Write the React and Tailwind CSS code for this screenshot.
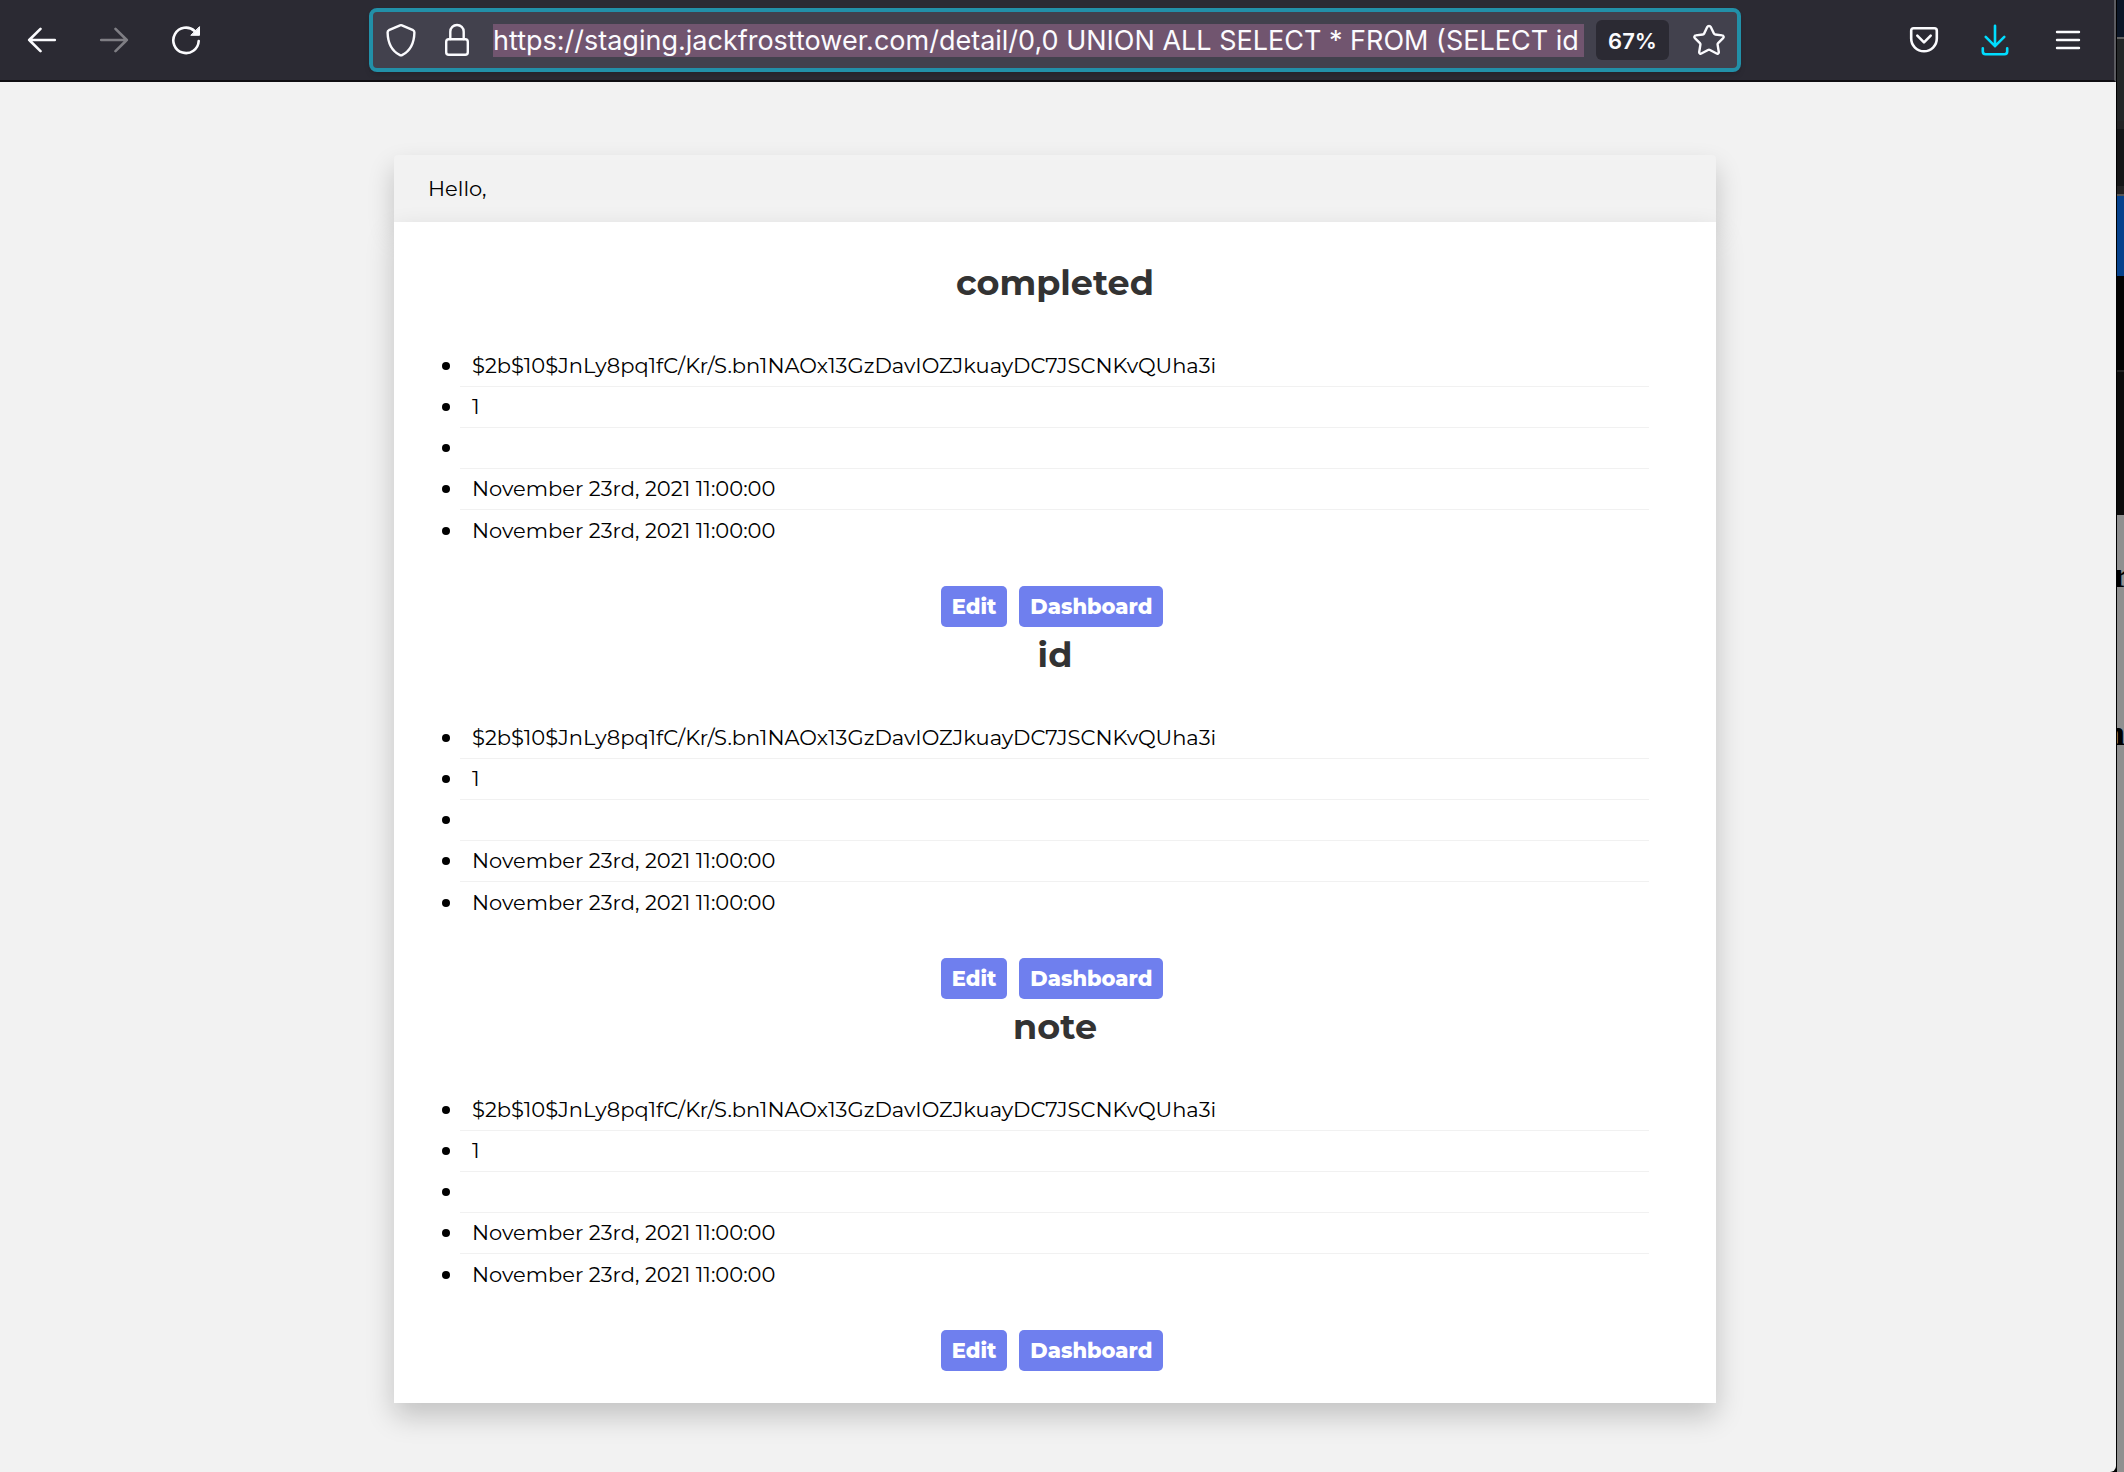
const URL_TEXT =
  "https://staging.jackfrosttower.com/detail/0,0 UNION ALL SELECT * FROM (SELECT id";

const rows = [
  "$2b$10$JnLy8pq1fC/Kr/S.bn1NAOx13GzDavIOZJkuayDC7JSCNKvQUha3i",
  "1",
  "",
  "November 23rd, 2021 11:00:00",
  "November 23rd, 2021 11:00:00",
];

const records = ["completed", "id", "note"];

const line = {
  fill: "none",
  stroke: "currentColor",
  strokeLinecap: "round",
  strokeLinejoin: "round",
};

function BackIcon() {
  return (
    <svg width="30" height="26" viewBox="0 0 30 26" strokeWidth="2.6" {...line}>
      <path d="M13.5 1.8 2.2 13l11.3 11.2M2.2 13h25.6" />
    </svg>
  );
}

function ForwardIcon() {
  return (
    <svg width="30" height="26" viewBox="0 0 30 26" strokeWidth="2.6" {...line}>
      <path d="M16.5 1.8 27.8 13 16.5 24.2M27.8 13H2.2" />
    </svg>
  );
}

function ReloadIcon() {
  return (
    <svg width="30" height="30" viewBox="0 0 30 30" strokeWidth="2.6" {...line}>
      <path d="M27.7 16A12.7 12.7 0 1 1 23.6 6" />
      <path d="M28.5 2v8.3H20.2z" fill="currentColor" strokeWidth="1" />
    </svg>
  );
}

function ShieldIcon() {
  return (
    <svg width="30" height="34" viewBox="0 0 30 34" strokeWidth="2.4" {...line}>
      <path d="M14.1 2.3q.9-.4 1.8 0l11.2 4.900q1.300.7 1.300 2.200C28.200 19 25 27.500 16 32.100q-1 .5-2 0C5 27.500 1.800 19 1.600 9.400q0-1.500 1.300-2.200z" />
    </svg>
  );
}

function LockIcon() {
  return (
    <svg width="24" height="34" viewBox="0 0 24 34" strokeWidth="2.4" {...line}>
      <rect x="1.2" y="16.2" width="21.6" height="15.6" rx="2.6" />
      <path d="M5.3 16V8.700a6.700 6.700 0 0 1 13.400 0V16" />
    </svg>
  );
}

function StarIcon() {
  return (
    <svg width="32" height="32" viewBox="0 0 32 32" strokeWidth="2.4" {...line}>
      <path d="M14.200 3.100a2 2 0 0 1 3.600 0l3.100 6.500q.4.800 1.300.900l7 .9a1.600 1.600 0 0 1 .9 2.800l-5 4.900q-.6.600-.5 1.500l1.200 7.400a1.500 1.500 0 0 1-2.200 1.500l-6.600-3.500q-1-.5-2 0l-6.600 3.500a1.500 1.500 0 0 1-2.200-1.500l1.200-7.400q.1-.9-.5-1.500l-5-4.900a1.600 1.600 0 0 1 .9-2.800l7-.9q.9-.1 1.300-.9z" />
    </svg>
  );
}

function PocketIcon() {
  return (
    <svg width="30" height="28" viewBox="0 0 30 28" strokeWidth="2.6" {...line}>
      <path d="M4.600 2.300h20.800q2.400 0 2.400 2.400v7.800a12.800 12.800 0 0 1-25.600 0V4.700q0-2.400 2.400-2.400z" />
      <path d="m8.300 9.600 6.700 6.700 6.700-6.700" />
    </svg>
  );
}

function DownloadIcon() {
  return (
    <svg width="28" height="32" viewBox="0 0 28 32" strokeWidth="2.6" {...line}>
      <path d="M14 1.800v20.400M4.700 12.800 14 22.200l9.300-9.400" />
      <path d="M1.800 24.300v3.200q0 2.700 2.700 2.700h19q2.700 0 2.700-2.700v-3.200" />
    </svg>
  );
}

function MenuIcon() {
  return (
    <svg width="26" height="20" viewBox="0 0 26 20" strokeWidth="2.4" {...line}>
      <path d="M2 2h22M2 10h22M2 18h22" />
    </svg>
  );
}

function Toolbar() {
  return (
    <div className="flex h-[82px] items-center border-r-2 border-b-2 border-r-[#5b5b60] border-b-[#0f0e12] bg-[#2b2a33] text-[#fbfbfe]">
      <nav className="flex w-[369px] shrink-0 items-center gap-[42px] pl-[27px]" aria-label="History">
        <button type="button" aria-label="Back">
          <BackIcon />
        </button>
        <button type="button" aria-label="Forward" disabled className="text-[#7f7e84]">
          <ForwardIcon />
        </button>
        <button type="button" aria-label="Reload">
          <ReloadIcon />
        </button>
      </nav>

      <div className="flex h-16 min-w-0 flex-1 items-center rounded-lg border-4 border-[#2290a8] bg-[#42414d] px-3 shadow-md">
        <button type="button" aria-label="Tracking protection" className="mr-[29px] ml-px">
          <ShieldIcon />
        </button>
        <button type="button" aria-label="Connection is secure" className="mr-6">
          <LockIcon />
        </button>
        <input
          type="text"
          aria-label="Address"
          defaultValue={URL_TEXT}
          className="h-[33px] min-w-0 flex-1 bg-[#71556f] pt-0.5 font-['Inter',sans-serif] text-[27px] text-[#fbfbfe] outline-none"
        />
        <button
          type="button"
          className="ml-3 h-10 w-[73px] rounded-md bg-[#2b2a33] pt-0.5 font-['Inter',sans-serif] text-[22px] font-semibold"
        >
          67%
        </button>
        <button type="button" aria-label="Bookmark this page" className="ml-6">
          <StarIcon />
        </button>
      </div>

      <div className="flex w-[373px] shrink-0 items-center justify-end pr-[33px]">
        <button type="button" aria-label="Save to Pocket" className="mr-[42px]">
          <PocketIcon />
        </button>
        <button type="button" aria-label="Downloads" className="mr-[46px] text-[#00ddff]">
          <DownloadIcon />
        </button>
        <button type="button" aria-label="Menu">
          <MenuIcon />
        </button>
      </div>
    </div>
  );
}

function Record({ title }) {
  return (
    <section>
      <h1 className="pb-[35px] text-center text-[35px] leading-[56px] font-bold text-[#333333]">
        {title}
      </h1>
      <ul className="mr-[34px] ml-[33px]">
        {rows.map((row, i) => (
          <li
            key={i}
            className="flex h-[41px] items-center border-b border-[#f1f1f1] pl-3 text-[21px] leading-10 before:mr-[22px] before:-ml-[30px] before:size-2 before:rounded-full before:bg-black last:border-b-0"
          >
            {row}
          </li>
        ))}
      </ul>
      <div className="flex justify-center gap-3 pt-[35px] pr-[6px]">
        {["Edit", "Dashboard"].map((label) => (
          <a
            key={label}
            href="#"
            className="rounded-[5px] bg-[#6f7fee] px-[11px] text-[21px] leading-[41px] font-extrabold text-white"
          >
            {label}
          </a>
        ))}
      </div>
    </section>
  );
}

function BackgroundWindow() {
  return (
    <div className="flex w-[7px] shrink-0 flex-col overflow-hidden bg-[#909090] font-['Liberation_Serif',serif] text-[36px] leading-10 font-bold text-black">
      <div className="h-[37px] shrink-0 bg-[#0b1627]" />
      <div className="h-[84px] shrink-0 border-t-2 border-[#606060] bg-[#232627]" />
      <div className="h-[73px] shrink-0 border-y-8 border-[#232324] bg-[#151617]" />
      <div className="h-[82px] shrink-0 border-t-2 border-[#555555] bg-[#06428d]" />
      <div className="h-[94px] shrink-0 bg-[#030303]" />
      <div className="h-[145px] shrink-0 border-t-2 border-[#222222] bg-[#0c0c0c]" />
      <div className="mt-10 -ml-1 h-10 shrink-0">r</div>
      <div className="mt-[118px] -ml-3 h-10 shrink-0">n</div>
    </div>
  );
}

export default function App() {
  return (
    <div className="flex min-h-screen bg-black">
      <div className="flex min-w-0 flex-1 flex-col rounded-br-md bg-[#f2f2f2]">
        <Toolbar />
        <main className="flex-1 pt-[73px] pr-[6px] pb-[69px] font-['Montserrat','Inter',sans-serif] text-black">
          <div className="mx-auto w-full max-w-[1322px]">
            <header className="rounded-t bg-[#f2f2f2] px-[34px] text-[21px] leading-[67px] shadow-[0_13px_27px_rgba(0,0,0,0.2)]">
              Hello,
            </header>
            <div className="bg-white px-[33px] pt-[33px] pb-8 shadow-[0_13px_27px_rgba(0,0,0,0.2)]">
              {records.map((title) => (
                <Record key={title} title={title} />
              ))}
            </div>
          </div>
        </main>
      </div>
      <div className="w-px shrink-0 bg-black" />
      <BackgroundWindow />
    </div>
  );
}
